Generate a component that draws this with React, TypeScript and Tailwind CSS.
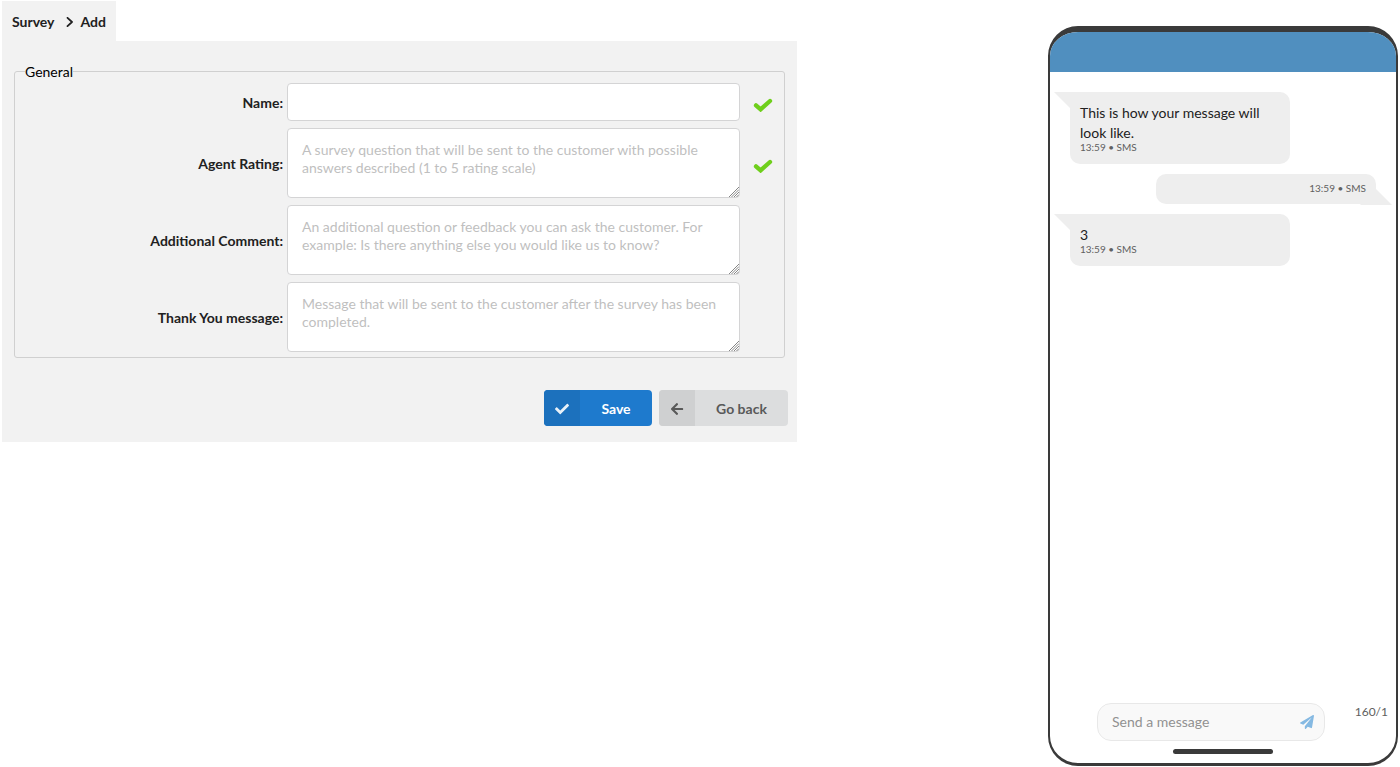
import type { ReactNode } from "react";
import { FaArrowLeft, FaCheck, FaPaperPlane } from "react-icons/fa";

const control =
  "block w-full rounded border border-[#d4d4d5] bg-white px-3.5 text-sm text-[#212121] outline-none placeholder:text-[#bfbfbf] focus:border-[#85b7d9]";

function Row({ id, label, valid, children }: { id: string; label: string; valid?: boolean; children: ReactNode }) {
  return (
    <div className="grid grid-cols-[268px_minmax(0,1fr)_40px] items-center gap-x-1">
      <label htmlFor={id} className="pt-0.5 text-right font-bold text-[#212121]">
        {label}
      </label>
      {children}
      <div className="flex justify-center pt-1.5 pr-0.5 text-[#6fcf1c]">
        {valid && (
          <svg viewBox="0 0 20 14" className="w-5" fill="none" aria-label="Valid" role="img">
            <path d="M3 7.4 7.6 11.4 17 3" stroke="currentColor" strokeWidth="4.3" strokeLinecap="round" />
          </svg>
        )}
      </div>
    </div>
  );
}

function Area({ id, label, placeholder, valid }: { id: string; label: string; placeholder: string; valid?: boolean }) {
  return (
    <Row id={id} label={label} valid={valid}>
      <div className="relative">
        <textarea
          id={id}
          placeholder={placeholder}
          className={`${control} h-[70px] resize py-3 leading-[18px] [&::-webkit-resizer]:bg-transparent`}
        />
        <svg
          viewBox="0 0 10 10"
          className="pointer-events-none absolute right-px bottom-px size-2.5"
          stroke="#858585"
          strokeWidth="1"
          aria-hidden="true"
        >
          <path d="M0 10 10 0M2.5 10 10 2.5M5 10 10 5M7.5 10 10 7.5" />
        </svg>
      </div>
    </Row>
  );
}

function Bubble({ text, sent }: { text?: string; sent?: boolean }) {
  return (
    <li
      className={
        sent
          ? "relative w-[220px] self-end rounded-[10px] bg-[#eee] px-2.5 pt-[7px] pb-[9px] text-right"
          : "relative w-[220px] rounded-[10px] bg-[#eee] px-2.5 pt-[11px] pb-[13px]"
      }
    >
      <svg
        viewBox="0 0 32 16"
        className={sent ? "absolute -right-4 -bottom-px h-4 w-8" : "absolute top-0 -left-4 h-4 w-8"}
        fill="#eee"
        aria-hidden="true"
      >
        <path d={sent ? "M0 16H32L16 0Z" : "M0 0H32L16 16Z"} />
      </svg>
      <div className="relative">
        {text && <p className="text-sm leading-5 text-[#212121]">{text}</p>}
        <p className={sent ? "text-[10px] leading-[14px] text-[#606060]" : "text-[10px] leading-[8px] text-[#606060]"}>
          13:59 • SMS
        </p>
      </div>
    </li>
  );
}

export default function App() {
  return (
    <main className="flex min-h-screen items-start justify-between bg-white pt-px pr-0.5 pb-px pl-0.5 font-['Lato',sans-serif] text-sm leading-[18px] text-[#212121]">
      <section className="w-[795px]">
        <nav aria-label="Breadcrumb" className="flex h-10 w-[114px] items-center bg-[#f2f2f2] px-2.5 pt-0.5 font-bold">
          <a href="#survey">Survey</a>
          <svg viewBox="0 0 8 10" className="mr-[7px] ml-auto h-2.5 w-2" fill="none" aria-hidden="true">
            <path d="M1.5 0.8 6 5 1.5 9.2" stroke="#212121" strokeWidth="1.8" strokeLinecap="round" strokeLinejoin="round" />
          </svg>
          <span>Add</span>
        </nav>
        <form className="bg-[#f2f2f2] px-3 pt-[22px] pb-4" onSubmit={(e) => e.preventDefault()}>
          <fieldset className="min-w-0 rounded-[3px] border border-[#d0d0d0] pt-[3px] pb-[5px]">
            <legend className="ml-2.5 leading-[17px] text-black">General</legend>
            <div className="flex flex-col gap-[7px]">
              <Row id="name" label="Name:" valid>
                <input id="name" type="text" className={`${control} h-[38px]`} />
              </Row>
              <Area
                id="rating"
                label="Agent Rating:"
                valid
                placeholder="A survey question that will be sent to the customer with possible answers described (1 to 5 rating scale)"
              />
              <Area
                id="comment"
                label="Additional Comment:"
                placeholder="An additional question or feedback you can ask the customer. For example: Is there anything else you would like us to know?"
              />
              <Area
                id="thanks"
                label="Thank You message:"
                placeholder="Message that will be sent to the customer after the survey has been completed."
              />
            </div>
          </fieldset>
          <div className="-mr-[3px] flex justify-end gap-[7px] pt-8 font-bold">
            <button type="submit" className="flex h-9 min-w-[108px] items-center overflow-hidden rounded bg-[#1e7acd] text-white">
              <span className="flex h-full w-9 items-center justify-center bg-[#1c71bd] pt-0.5 text-[#e8f1f8]">
                <FaCheck className="size-3.5" />
              </span>
              <span className="flex-1 px-5 pt-0.5">Save</span>
            </button>
            <button type="button" className="flex h-9 min-w-[129px] items-center overflow-hidden rounded bg-[#dcddde] text-[#595959]">
              <span className="flex h-full w-9 items-center justify-center bg-[#cfd0d1] pt-0.5">
                <FaArrowLeft className="size-3.5" />
              </span>
              <span className="flex-1 px-5 pt-0.5">Go back</span>
            </button>
          </div>
        </form>
      </section>

      <aside className="mt-[25px] flex w-[350px] flex-col self-stretch overflow-hidden rounded-[30px] border-x-2 border-t-[6px] border-b-[3px] border-[#3a3a3a] bg-white">
        <div className="h-10 bg-[#508fbf]" />
        <ul className="flex flex-1 flex-col gap-2.5 px-5 pt-5">
          <Bubble text="This is how your message will look like." />
          <Bubble sent />
          <Bubble text="3" />
        </ul>
        <div className="flex items-start justify-between pr-2 pl-[47px]">
          <div className="flex h-[38px] w-[228px] items-center rounded-[14px] border border-[#e8e8e8] bg-[#f9f9f9] pr-2.5 pl-3.5">
            <input
              type="text"
              aria-label="Send a message"
              placeholder="Send a message"
              className="min-w-0 flex-1 bg-transparent outline-none placeholder:text-[#919191]"
            />
            <button type="submit" aria-label="Send" className="text-[#85b9e2]">
              <FaPaperPlane className="size-3.5" />
            </button>
          </div>
          <span className="text-xs leading-[18px] text-[#606060]">160/1</span>
        </div>
        <div className="mx-auto mt-2 mb-[9px] h-[5px] w-[100px] rounded-sm bg-[#3a3a3a]" />
      </aside>
    </main>
  );
}
